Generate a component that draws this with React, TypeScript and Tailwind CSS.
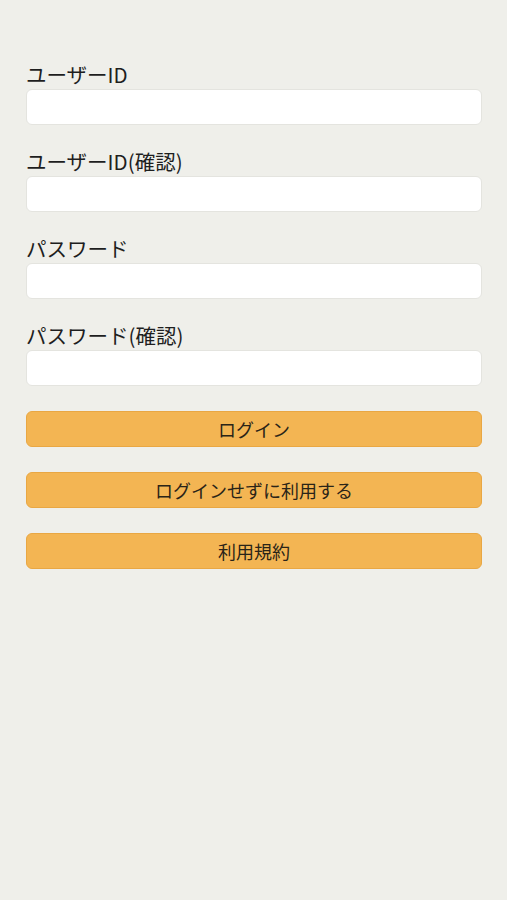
import React from "react";

const fields = ["ユーザーID", "ユーザーID(確認)", "パスワード", "パスワード(確認)"];
const buttons = ["ログイン", "ログインせずに利用する", "利用規約"];

export default function App() {
  return (
    <div
      className="min-h-[900px] w-full bg-[#efefea] pl-[26px] pr-[25px] pt-[63px] text-[#1e1e1e]"
      style={{ fontFamily: '"Noto Sans CJK JP", "Noto Sans", sans-serif' }}
    >
      {/* Form fields */}
      {fields.map((label, idx) => (
        <div key={idx} className={idx === 0 ? "" : "mt-[25px]"}>
          <label className="block text-[20.5px] leading-[22px] mb-1">{label}</label>
          <input
            type={label.startsWith("パスワード") ? "password" : "text"}
            className="block h-9 w-full rounded-[6px] border border-[#e4e4df] bg-white px-3 outline-none"
          />
        </div>
      ))}

      {/* Buttons */}
      <div className="mt-[25px] flex flex-col gap-[25px]">
        {buttons.map((text, idx) => (
          <button
            key={idx}
            className="h-9 w-full rounded-[6px] border border-[#e9a743] bg-[#f3b553] text-[18px] leading-none text-[#2a2418]"
          >
            {text}
          </button>
        ))}
      </div>
    </div>
  );
}
